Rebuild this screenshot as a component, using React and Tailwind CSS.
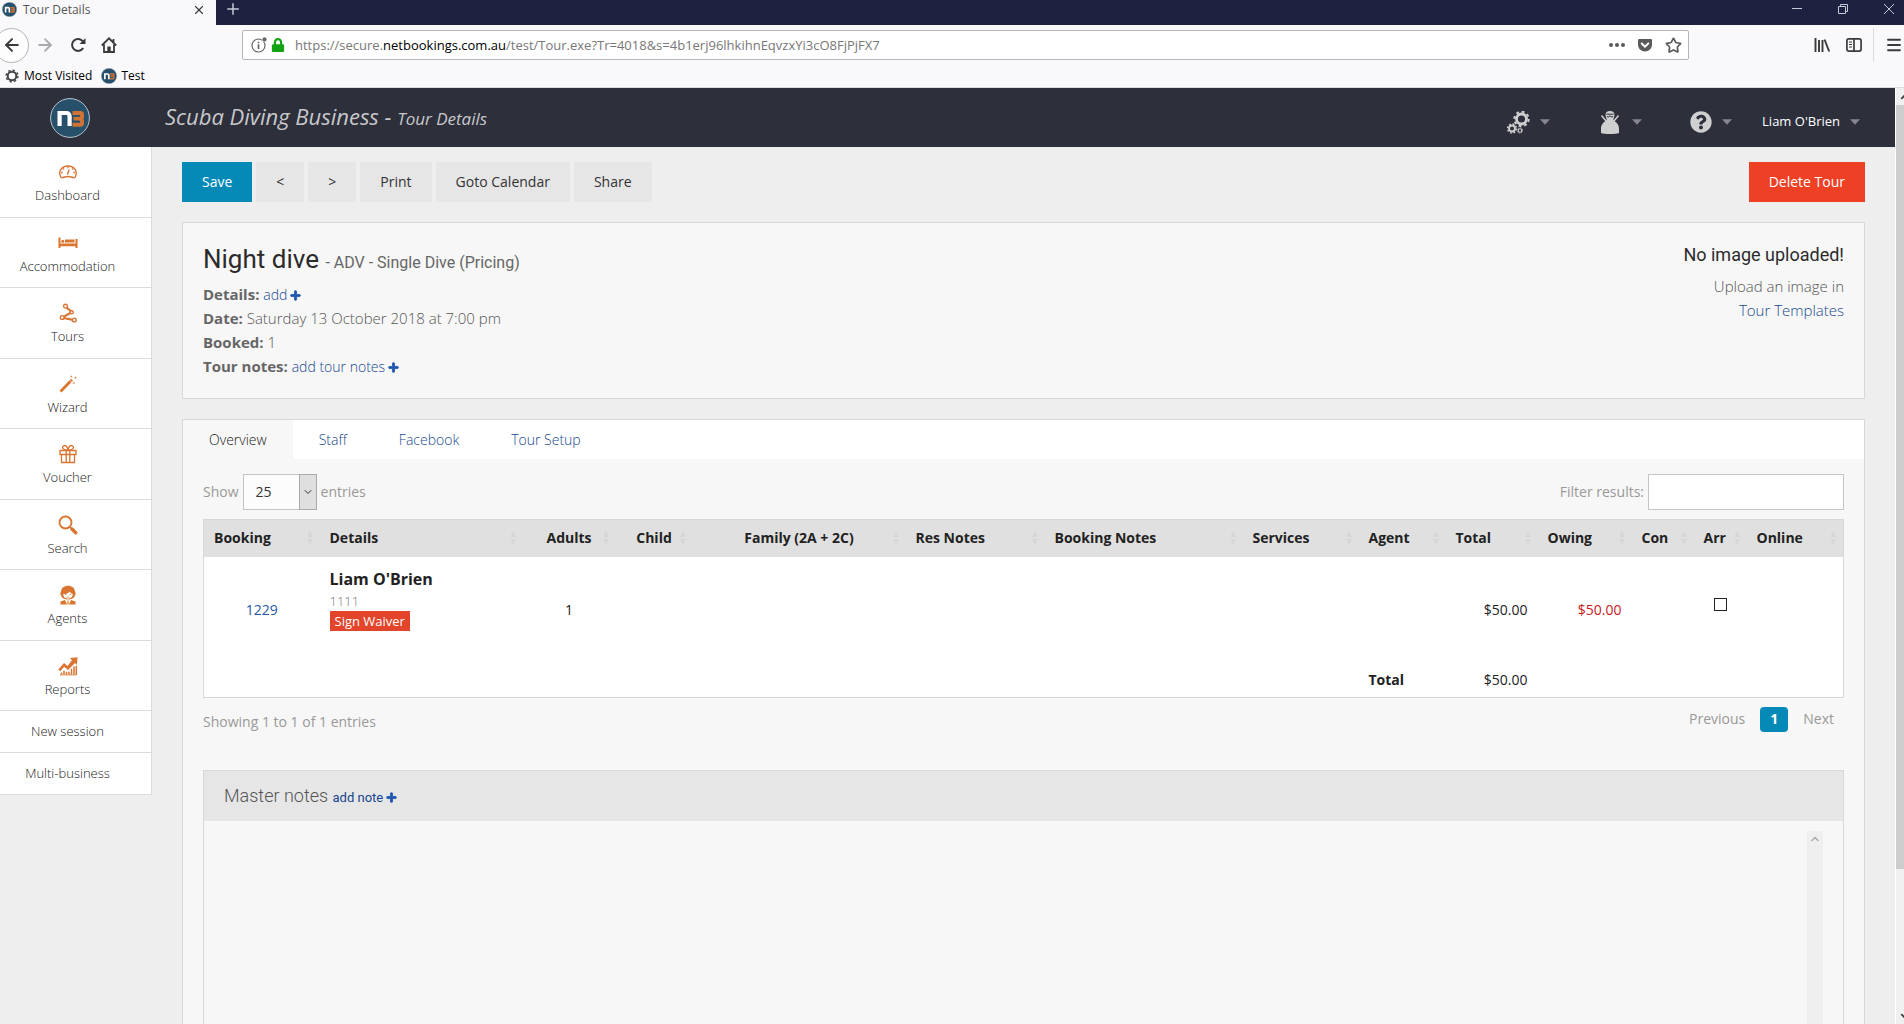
import { FaPlus, FaQuestionCircle, FaLock, FaGetPocket } from 'react-icons/fa';
import { ArrowLeft, ArrowRight, X, Plus, Star, Menu, ChevronDown, ChevronUp } from 'lucide-react';

const columns = [
    { label: 'Booking', width: 'w-[116px]' },
    { label: 'Details', width: 'w-[203px]' },
    { label: 'Adults', width: 'w-[93px]', center: true },
    { label: 'Child', width: 'w-[77px]', center: true },
    { label: 'Family (2A + 2C)', width: 'w-[213px]', center: true },
    { label: 'Res Notes', width: 'w-[139px]' },
    { label: 'Booking Notes', width: 'w-auto' },
    { label: 'Services', width: 'w-[116px]' },
    { label: 'Agent', width: 'w-[87px]' },
    { label: 'Total', width: 'w-[92px]' },
    { label: 'Owing', width: 'w-[94px]' },
    { label: 'Con', width: 'w-[62px]' },
    { label: 'Arr', width: 'w-[53px]' },
    { label: 'Online', width: 'w-[97px]' },
];

const tabs = ['Overview', 'Staff', 'Facebook', 'Tour Setup'];

const Logo = ({ className }) => (
    <svg viewBox="0 0 40 40" className={className} aria-hidden="true">
        <circle cx="20" cy="20" r="19.4" fill="#27506b" stroke="#b9c6d0" strokeWidth="1" />
        <path d="M9.600 28V15h7a3 3 0 0 1 3 3v10" fill="none" stroke="#fff" strokeWidth="4.200" />
        <path d="M22.500 15h8a1.500 1.500 0 0 1 1.500 1.500v2.500l-1.500 1.700 1.500 1.700v2.800a1.500 1.500 0 0 1-1.500 1.500h-8" fill="none" stroke="#cf7334" strokeWidth="4" />
        <path d="M23.500 20.700h7" stroke="#cf7334" strokeWidth="3.600" />
    </svg>
);

const Cog = ({ cx, cy, r, w, teeth = 8 }) => {
    const outer = r + w / 2 + w * 0.3;
    const seg = (2 * Math.PI * outer) / (teeth * 2);
    return (
        <g fill="none" stroke="currentColor">
            <circle cx={cx} cy={cy} r={r} strokeWidth={w} />
            <circle cx={cx} cy={cy} r={outer} strokeWidth={w * 0.7} strokeDasharray={`${seg} ${seg}`} />
        </g>
    );
};

const Caret = () => (
    <svg viewBox="0 0 10 6" className="w-[10px] h-[6px] text-[#85868f]" fill="currentColor" aria-hidden="true">
        <path d="M0 .3h10L5 5.700z" />
    </svg>
);

const SettingsIcon = () => (
    <svg viewBox="0 0 24 24" className="size-6" aria-hidden="true">
        <Cog cx={15.500} cy={9} r={5} w={2.800} />
        <Cog cx={6} cy={18.500} r={3} w={1.900} />
        <Cog cx={14} cy={20.500} r={1.800} w={1.100} />
    </svg>
);

const DiverIcon = () => (
    <svg viewBox="0 0 24 24" className="size-6" fill="currentColor" aria-hidden="true">
        <path d="M3 23v-4.500c0-4.500 3-6 5.500-8.500h7c2.500 2.500 5.500 4 5.500 8.500V23c-3 1.300-15 1.300-18 0z" />
        <path d="M7.500 5C7.500 2.500 9 1 12 1s4.500 1.500 4.500 4l-.8 4c-1 3-6.400 3-7.400 0z" />
        <path d="M8.300 4.200h7.400M8.800 6.800h2l1.200-1 1.200 1h2" stroke="#2d2f3b" strokeWidth="1" fill="none" />
        <path d="M3.500 5.500L8 11M20.500 5.500L16 11" stroke="currentColor" strokeWidth="1.500" />
    </svg>
);

const DashboardIcon = () => (
    <svg viewBox="0 0 20 20" className="size-5" fill="none" stroke="currentColor" strokeWidth="1.400">
        <path d="M3 15.500C-.5 9 4 4 10 4s10.500 5 7 11.500c-2.200.8-3.200-1-7-1s-4.800 1.800-7 1z" />
        <path d="M10 4.500v1.700M3 10.500h1.700M15.300 10.500H17M5 6.500l1 1M15 6.500l-1 1M11.200 7.500L9.500 12.500" />
    </svg>
);

const BedIcon = () => (
    <svg viewBox="0 0 20 20" className="size-5" fill="currentColor">
        <path d="M.5 4.500h2V15h-2zM17.500 6h2v9h-2zM2 10.500h16v2.700H2z" />
        <circle cx="4.800" cy="8.200" r="1.500" />
        <path d="M7 6.500h9.500v3H7z" />
    </svg>
);

const ToursIcon = () => (
    <svg viewBox="0 0 20 20" className="size-5" fill="none" stroke="currentColor">
        <path d="M8.500 4.200l4.600 4.300M12.500 10L5.700 13.600M5.500 15l9.500 1.800" strokeWidth="2.200" />
        <circle cx="7.500" cy="3.200" r="1.900" strokeWidth="1.400" fill="#fff" />
        <circle cx="13.700" cy="9.300" r="1.600" strokeWidth="1.400" fill="#fff" />
        <circle cx="4.200" cy="14.500" r="1.900" strokeWidth="1.400" fill="#fff" />
        <circle cx="16.300" cy="17" r="1.900" strokeWidth="1.400" fill="#fff" />
    </svg>
);

const WizardIcon = () => (
    <svg viewBox="0 0 20 20" className="size-5" fill="none" stroke="currentColor">
        <path d="M2.500 17.500L14 5.800" strokeWidth="2.800" />
        <path d="M11.500 6l2.500 2.400" stroke="#fff" strokeWidth=".7" />
        <path d="M13.300 1.500v2M12.300 2.500h2M17.500 2.500v2.400M16.300 3.700h2.400M15.800 8v2M14.800 9h2" strokeWidth=".6" />
    </svg>
);

const VoucherIcon = () => (
    <svg viewBox="0 0 20 20" className="size-5" fill="none" stroke="currentColor" strokeWidth="1.300">
        <path d="M2 6.500h16v4H2zM3.500 10.500V18.500h13V10.500M8.200 6.500v12M11.800 6.500v12" />
        <path d="M9.500 6.200C5 6 3.500 3.500 5.500 2s4 1 4.500 4c.5-3 2.500-5.500 4.500-4s.5 4-4 4.200" />
    </svg>
);

const SearchIcon = () => (
    <svg viewBox="0 0 20 20" className="size-5" fill="none" stroke="currentColor">
        <circle cx="7.500" cy="7.500" r="6" strokeWidth="1.800" />
        <path d="M12 12l2 2" strokeWidth="1.700" />
        <path d="M14 14l3.700 3.700" strokeWidth="3.400" strokeLinecap="round" />
    </svg>
);

const AgentsIcon = () => (
    <svg viewBox="0 0 20 20" className="size-5" fill="currentColor">
        <path d="M3 10.500C2 9.500 2.400 7 3 6.500 3.500 3 6 .8 10 .8s6.500 2.200 7 5.700c.6.500 1 3 0 4-1 3-4 4-7 4s-6-1-7-4z" />
        <path d="M5.200 9c2 .3 5-.5 6.500-2.500C12.500 8 14 8.800 14.800 9c0 2.800-2 4.700-4.800 4.700S5.200 11.800 5.200 9z" fill="#fff" />
        <path d="M7 9.500h1.500M11.500 9.500H13M8.500 12h3" stroke="currentColor" strokeWidth=".7" />
        <path d="M2.500 19.500v-3L7 15l2 4.500zM17.500 19.500v-3L13 15l-2 4.500z" />
        <path d="M9.300 15.500h1.400l.3 4H9z" fill="#f0a23c" />
    </svg>
);

const ReportsIcon = () => (
    <svg viewBox="0 0 20 20" className="size-5" fill="currentColor">
        <path d="M.5 13.200L6 7l3.500 3L14 4.300 12 2 19.500 1.200 19 9l-2-2-7 7-3.800-3.300L2 15.500z" />
        <path d="M3.500 18.800v-2.300M6 18.800v-4M8.500 18.800v-3M11 18.800v-3M13.500 18.800v-6M16 18.800V10.500M18.300 18.800V10" stroke="currentColor" strokeWidth="1.500" />
        <path d="M2 18.500h17v.8H2z" />
    </svg>
);

const navItems = [
    { label: 'Dashboard', Icon: DashboardIcon },
    { label: 'Accommodation', Icon: BedIcon },
    { label: 'Tours', Icon: ToursIcon },
    { label: 'Wizard', Icon: WizardIcon },
    { label: 'Voucher', Icon: VoucherIcon },
    { label: 'Search', Icon: SearchIcon },
    { label: 'Agents', Icon: AgentsIcon },
    { label: 'Reports', Icon: ReportsIcon },
];

const SortIcon = () => (
    <svg viewBox="0 0 6 14" className="w-[6px] h-[14px] shrink-0 text-[#d7d7d7]" fill="currentColor" aria-hidden="true">
        <path d="M3 0l3 6H0zM3 14l3-6H0z" />
    </svg>
);

const ToolButton = ({ children }) => (
    <button className="h-10 px-5 bg-[#e6e6e6] text-[#333]">{children}</button>
);

const AddLink = ({ children, className = '' }) => (
    <a href="#" className={`text-[#17478f] ${className}`}>
        {children}
        <FaPlus className="inline-block ml-[3px] mb-[2px] size-[11px] stroke-[#1f57b0] stroke-[40px] text-[#1f57b0]" />
    </a>
);

function BrowserChrome() {
    return (
        <div className="shrink-0 bg-[#f9f9fb] text-xs text-black border-b border-[#dcdce0]">
            {/* Tab strip */}
            <div className="flex h-[25px] bg-[#1f2140] text-[#c9c9d6]">
                <div className="flex items-center w-[216px] pl-[2px] pr-[10px] pb-[6px] bg-[#f9f9fb] text-[#555]">
                    <Logo className="size-[15px]" />
                    <span className="ml-[6px] flex-1">Tour Details</span>
                    <button aria-label="Close tab" className="text-[#3b3b3b]"><X className="size-[14px]" strokeWidth={2} /></button>
                </div>
                <button aria-label="New tab" className="flex items-center px-2 pb-[8px]"><Plus className="size-[18px]" strokeWidth={2} /></button>
                <div className="ml-auto flex items-center gap-[36px] pr-[10px] pb-[8px]">
                    <button aria-label="Minimize"><svg viewBox="0 0 10 10" className="size-[10px]" stroke="currentColor"><path d="M0 4.500h10" /></svg></button>
                    <button aria-label="Restore"><svg viewBox="0 0 10 10" className="size-[10px]" stroke="currentColor" fill="none"><path d="M.5 2.500h7v7h-7zM2.500 2.500v-2h7v7h-2" /></svg></button>
                    <button aria-label="Close"><svg viewBox="0 0 10 10" className="size-[10px]" stroke="currentColor"><path d="M0 0l10 10M10 0L0 10" /></svg></button>
                </div>
            </div>

            {/* Navigation bar */}
            <div className="flex items-center h-10 text-[#3b3b3b]">
                <button aria-label="Back" className="-ml-[6px] size-[35px] shrink-0 flex items-center justify-center rounded-full border border-[#b5b5b8] bg-[#fdfdfd]">
                    <ArrowLeft className="size-5" strokeWidth={2.4} />
                </button>
                <button aria-label="Forward" className="ml-[6px] text-[#aaa]"><ArrowRight className="size-5" strokeWidth={2.2} /></button>
                <button aria-label="Reload" className="ml-[15px]">
                    <svg viewBox="0 0 16 16" className="size-4" fill="none" stroke="currentColor" strokeWidth="2"><path d="M13.200 11A6 6 0 1 1 13 4.500" /><path d="M15.500 1v6h-6z" fill="currentColor" stroke="none" /></svg>
                </button>
                <button aria-label="Home" className="ml-[15px]">
                    <svg viewBox="0 0 16 16" className="size-4" fill="none" stroke="currentColor" strokeWidth="1.800"><path d="M.8 8.500L8 1.300l7.200 7.200M3 7.500V15h10V7.500M12.500 5.500V2" /><path d="M6.300 15V9.500h3.400V15z" fill="currentColor" stroke="none" /></svg>
                </button>
                <div className="ml-[125px] mr-[125px] flex-1 flex items-center h-[30px] px-2 bg-white border border-[#b5b5b8] rounded-xs">
                    <svg viewBox="0 0 16 16" className="size-4 text-[#666]" fill="none" stroke="currentColor" strokeWidth="1.200"><circle cx="7.500" cy="8.500" r="6.500" /><path d="M7.500 7.300V12M7.500 4.700v1.500" strokeWidth="1.700" /><circle cx="13.500" cy="2.500" r="2.400" fill="currentColor" stroke="#fff" strokeWidth=".6" /></svg>
                    <FaLock className="ml-1 size-[14px] text-[#12a312]" />
                    <span className="ml-[10px] pt-[2px] flex-1 text-[13px] text-[#777]">
                        https://secure.<span className="text-black">netbookings.com.au</span>/test/Tour.exe?Tr=4018&amp;s=4b1erj96lhkihnEqvzxYi3cO8FjPjFX7
                    </span>
                    <button aria-label="Page actions" className="text-[#5a5a5a]"><svg viewBox="0 0 16 4" className="w-4 h-1" fill="currentColor"><circle cx="2" cy="2" r="2" /><circle cx="8" cy="2" r="2" /><circle cx="14" cy="2" r="2" /></svg></button>
                    <button aria-label="Save to Pocket" className="ml-3 text-[#5a5a5a]"><FaGetPocket className="size-4" /></button>
                    <button aria-label="Bookmark" className="ml-3 -mr-[2px] text-[#5a5a5a]"><Star className="size-[17px]" strokeWidth={2.4} /></button>
                </div>
                <button aria-label="Library">
                    <svg viewBox="0 0 16 16" className="size-4" stroke="currentColor" strokeWidth="1.900"><path d="M1.500 1v14M5 3v12M8.500 3v12M10.500 2.500l4.700 12" /></svg>
                </button>
                <button aria-label="Sidebars" className="ml-4">
                    <svg viewBox="0 0 16 16" className="size-4" fill="none" stroke="currentColor" strokeWidth="1.700"><rect x=".9" y="1.900" width="14.200" height="12.200" rx="2" /><path d="M8 2v12" /><path d="M3 5h3M3 7.500h3M3 10h3" strokeWidth="1" /></svg>
                </button>
                <span className="ml-[11px] w-px h-[34px] bg-[#dcdce0]" />
                <button aria-label="Open menu" className="ml-[11px] mr-[1px]"><Menu className="size-[18px]" strokeWidth={2.4} /></button>
            </div>

            {/* Bookmarks */}
            <div className="flex items-center h-[22px] pl-[4px]">
                <a href="#" className="flex items-center gap-1">
                    <svg viewBox="0 0 16 16" className="size-4 text-[#444]"><Cog cx={8} cy={8} r={4.300} w={2} /></svg>
                    Most Visited
                </a>
                <a href="#" className="ml-[9px] flex items-center gap-1">
                    <Logo className="size-4" />
                    Test
                </a>
            </div>
        </div>
    );
}

function Header() {
    return (
        <header className="flex items-center shrink-0 h-[59px] bg-[#2d2f3b] text-[#d0d0d0]">
            <a href="#" aria-label="Home" className="ml-[50px]"><Logo className="size-10" /></a>
            <h1 className="ml-[75px] pb-[2px] text-[22px] italic font-normal text-[#c8c8cb]">
                Scuba Diving Business - <small className="text-[17px]">Tour Details</small>
            </h1>
            <nav className="ml-auto mr-[35px] pt-[8px] flex items-center text-[13px]">
                <button aria-label="Settings" className="flex items-center gap-[10px]"><SettingsIcon /><Caret /></button>
                <button aria-label="Customer" className="ml-12 flex items-center gap-[10px]"><DiverIcon /><Caret /></button>
                <button aria-label="Help" className="ml-12 flex items-center gap-[10px]"><FaQuestionCircle className="size-[22px]" /><Caret /></button>
                <button className="ml-[30px] flex items-center gap-[10px] text-white">Liam O'Brien <Caret /></button>
            </nav>
        </header>
    );
}

function Sidebar() {
    return (
        <aside className="w-[152px] shrink-0 self-start bg-white border-r border-b border-[#dcdcdc] text-[13px] font-light text-[#222]">
            {navItems.map(({ label, Icon }) => (
                <a key={label} href="#" className="flex flex-col items-center gap-px pt-[15px] pr-4 odd:h-[71px] even:h-[70px] border-b border-[#dcdcdc]">
                    <span className="text-[#d97431]"><Icon /></span>
                    <span className="leading-6">{label}</span>
                </a>
            ))}
            <a href="#" className="flex items-center justify-center h-[42px] pr-4 border-b border-[#dcdcdc]">New session</a>
            <a href="#" className="flex items-center justify-center h-[41px] pr-4">Multi-business</a>
        </aside>
    );
}

function TourSummary() {
    return (
        <section className="mt-5 flex justify-between px-5 pt-5 pb-[20px] bg-[#f7f7f7] border border-[#d8d8d8] text-[15px] leading-6 font-light text-[#555]">
            <div>
                <h2 className="mb-[7px] font-[Roboto] font-normal text-[26px] leading-8 text-[#2b2b2b]">
                    Night dive <small className="text-base text-[#666]">- ADV - Single Dive (Pricing)</small>
                </h2>
                <p><b className="font-bold text-[#666]">Details:</b> <AddLink className="text-sm">add</AddLink></p>
                <p><b className="font-bold text-[#666]">Date:</b> Saturday 13 October 2018 at 7:00 pm</p>
                <p><b className="font-bold text-[#666]">Booked:</b> 1</p>
                <p><b className="font-bold text-[#666]">Tour notes:</b> <AddLink className="text-sm">add tour notes</AddLink></p>
            </div>
            <div className="text-right">
                <h3 className="mb-[7px] font-[Roboto] font-normal text-lg leading-6 text-[#2b2b2b]">No image uploaded!</h3>
                <p>Upload an image in</p>
                <a href="#" className="text-[#17478f]">Tour Templates</a>
            </div>
        </section>
    );
}

function BookingsTable() {
    return (
        <table className="mt-[9px] w-full table-fixed border-collapse bg-white border border-[#d8d8d8] text-sm text-[#222]">
            <thead>
                <tr className="h-[37px] bg-[#e0e0e0]">
                    {columns.map(({ label, width, center }) => (
                        <th key={label} className={`${width} p-0 font-bold text-left whitespace-nowrap`}>
                            <div className={center ? 'flex items-center pl-[13px] pr-[7px]' : 'flex items-center pl-[10px] pr-[7px]'}>
                                <span className={center ? 'flex-1 text-center' : 'flex-1'}>{label}</span>
                                <SortIcon />
                            </div>
                        </th>
                    ))}
                </tr>
            </thead>
            <tbody>
                <tr className="h-[106px]">
                    <td className="text-center"><a href="#" className="text-[#1f57a4]">1229</a></td>
                    <td className="px-[10px] pt-[10px] align-top">
                        <div className="text-base leading-6 font-bold">Liam O'Brien</div>
                        <div className="text-[13px] leading-5 font-light text-[#777]">1111</div>
                        <a href="#" className="inline-block px-[5px] leading-5 text-[13px] bg-[#e2452b] text-white">Sign Waiver</a>
                    </td>
                    <td className="text-center">1</td>
                    <td /><td /><td /><td /><td /><td />
                    <td className="pr-[10px] text-right">$50.00</td>
                    <td className="pr-[10px] text-right text-[#c62020]">$50.00</td>
                    <td />
                    <td className="pb-[12px] text-center">
                        <input type="checkbox" aria-label="Arrived" className="inline-block size-[13px] appearance-none border border-[#222] bg-white align-middle" />
                    </td>
                    <td />
                </tr>
            </tbody>
            <tfoot>
                <tr className="h-[35px]">
                    <td colSpan={8} />
                    <th className="pl-[10px] text-left font-bold">Total</th>
                    <td className="pr-[10px] text-right">$50.00</td>
                    <td colSpan={4} />
                </tr>
            </tfoot>
        </table>
    );
}

export default function App() {
    return (
        <div className="flex flex-col h-screen overflow-hidden bg-[#eee] font-['Open_Sans',sans-serif] text-sm">
            <BrowserChrome />
            <div className="flex flex-1 min-h-0">
                <div className="flex flex-col flex-1 min-w-0">
                    <Header />
                    <div className="flex flex-1 min-h-0">
                        <Sidebar />
                        <main className="flex-1 min-w-0 flex flex-col pl-[30px] pr-[30px] pt-[15px]">
                            <div className="flex gap-1">
                                <button className="h-10 px-5 bg-[#058ab8] text-white">Save</button>
                                <ToolButton>&lt;</ToolButton>
                                <ToolButton>&gt;</ToolButton>
                                <ToolButton>Print</ToolButton>
                                <ToolButton>Goto Calendar</ToolButton>
                                <ToolButton>Share</ToolButton>
                                <button className="ml-auto h-10 px-5 bg-[#ee4025] text-white">Delete Tour</button>
                            </div>

                            <TourSummary />

                            <section className="mt-5 flex-1 min-h-0 flex flex-col bg-[#f7f7f7] border border-b-0 border-[#d8d8d8]">
                                <nav className="flex shrink-0 bg-white font-light">
                                    {tabs.map((tab, i) => (
                                        <a key={tab} href="#" className={`px-[26px] leading-[39px] ${i === 0 ? 'bg-[#f7f7f7] text-[#222]' : 'text-[#17478f]'}`}>
                                            {tab}
                                        </a>
                                    ))}
                                </nav>

                                <div className="flex-1 min-h-0 flex flex-col px-5 pt-[15px] text-[#999]">
                                    <div className="flex items-center justify-between">
                                        <label className="flex items-center gap-1">
                                            Show
                                            <span className="grid">
                                                <select defaultValue="25" className="col-start-1 row-start-1 w-[74px] h-9 pl-3 appearance-none bg-[#fcfcfc] border border-[#c4c4c4] text-[#333]">
                                                    <option>10</option>
                                                    <option>25</option>
                                                    <option>50</option>
                                                </select>
                                                <span className="col-start-1 row-start-1 justify-self-end flex items-center justify-center w-[18px] h-9 bg-[#dfdfdf] border border-[#aaa] text-[#333] pointer-events-none">
                                                    <ChevronDown className="size-3" />
                                                </span>
                                            </span>
                                            entries
                                        </label>
                                        <label className="flex items-center gap-1">
                                            Filter results:
                                            <input type="text" className="w-[196px] h-9 px-2 bg-white border border-[#c4c4c4]" />
                                        </label>
                                    </div>

                                    <BookingsTable />

                                    <div className="mt-2 flex items-center justify-between">
                                        <p className="pt-[6px]">Showing 1 to 1 of 1 entries</p>
                                        <div className="flex items-center gap-[15px] pr-[10px]">
                                            <button>Previous</button>
                                            <button className="w-7 h-[25px] rounded-sm bg-[#058ab8] text-white font-bold">1</button>
                                            <button>Next</button>
                                        </div>
                                    </div>

                                    {/* Master notes */}
                                    <div className="mt-[38px] flex-1 min-h-0 flex flex-col border border-b-0 border-[#d8d8d8]">
                                        <h3 className="shrink-0 h-[50px] px-5 bg-[#e6e6e6] font-[Roboto] text-lg font-light leading-[50px] text-[#555]">
                                            Master notes <AddLink className="text-[13px] font-normal">add note</AddLink>
                                        </h3>
                                        <div className="flex-1 flex justify-end pt-[10px] pr-5">
                                            <div className="w-4 pt-[2px] flex justify-center bg-[#efefef] text-[#aaa]"><ChevronUp className="size-3" strokeWidth={3} /></div>
                                        </div>
                                    </div>
                                </div>
                            </section>
                        </main>
                    </div>
                </div>

                {/* Page scrollbar */}
                <div className="w-[9px] shrink-0 flex flex-col overflow-hidden bg-[#f0f0f0] border-l border-white">
                    <ChevronUp className="ml-[2px] my-[1px] size-[15px] shrink-0 text-[#444]" strokeWidth={3} />
                    <div className="h-[764px] bg-[#cdcdcd]" />
                    <ChevronDown className="mt-auto ml-[2px] size-[15px] shrink-0 text-[#444]" strokeWidth={3} />
                </div>
            </div>
        </div>
    );
}
